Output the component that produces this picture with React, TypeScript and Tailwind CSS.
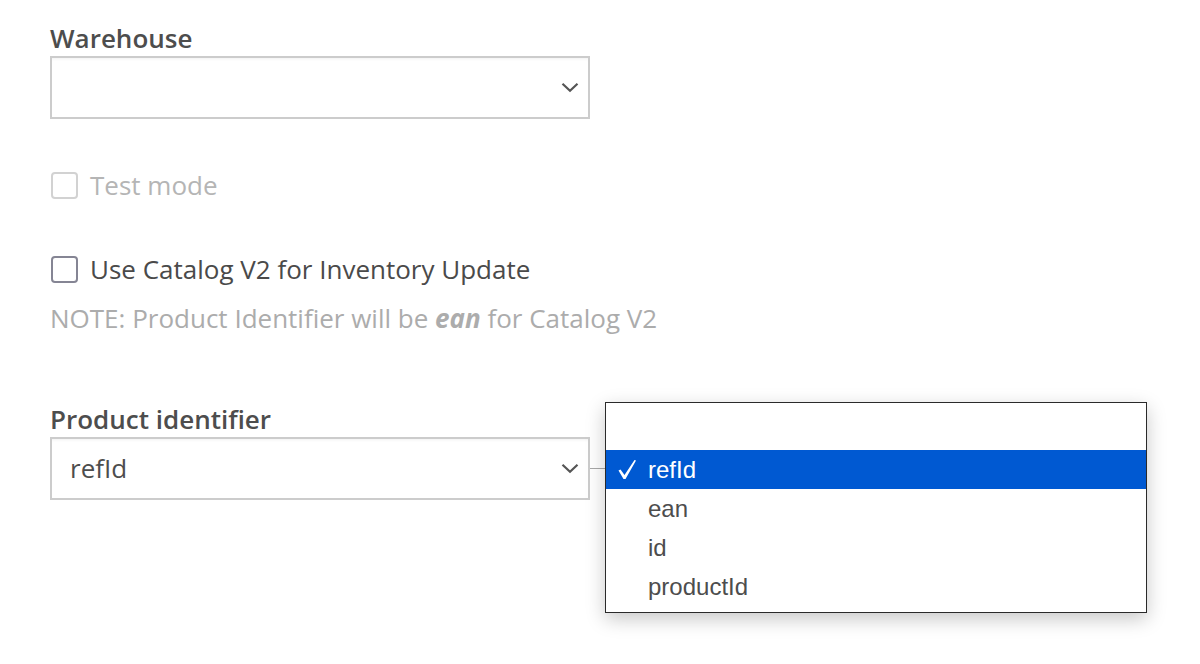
import React from "react";

const sans = "font-['Open_Sans','Liberation_Sans',sans-serif]";

function Chevron() {
  return (
    <svg width="18" height="11" viewBox="0 0 18 11" className="shrink-0">
      <path d="M1.5 1.8 L9 8.8 L16.5 1.8" fill="none" stroke="#555" strokeWidth="2.2" />
    </svg>
  );
}

function Check() {
  return (
    <svg width="20" height="21" viewBox="0 0 20 21" className="shrink-0">
      <path d="M1.5 11.5 L3.5 10.5 L7.5 16 L17.5 1 L19 1.5 L8.5 20 L6.5 20 Z" fill="#fff" />
    </svg>
  );
}

function Select({ value }: { value?: string }) {
  return (
    <div className="flex h-[63px] w-[540px] items-center justify-between border-2 border-[#cccccc] bg-white pl-[18px] pr-[9px] shadow-[inset_0_3px_3px_-2px_rgba(0,0,0,0.06)]">
      <span className="text-[26px] text-[#4d4d4d]">{value}</span>
      <Chevron />
    </div>
  );
}

function Checkbox({ label, disabled }: { label: string; disabled?: boolean }) {
  return (
    <div className="flex h-[34px] items-center gap-[12px]">
      <span
        className={
          disabled
            ? "ml-px h-[27px] w-[27px] rounded-[4px] border-2 border-[#d2d2d2] bg-white"
            : "ml-px h-[27px] w-[27px] rounded-[4px] border-2 border-[#858594] bg-white"
        }
      />
      <span className={disabled ? "text-[26px] text-[#b5b5b5]" : "text-[26px] text-[#4a4a4a]"}>{label}</span>
    </div>
  );
}

const options = ["ean", "id", "productId"];

export default function App() {
  return (
    <div className={`relative h-[664px] w-[1200px] overflow-hidden bg-white ${sans}`}>
      <div className="flex flex-col pl-[50px] pt-[21px]">
        <label className="text-[26px] font-semibold leading-[34px] text-[#4d4d4d]">Warehouse</label>
        <div className="mt-px">
          <Select />
        </div>

        <div className="mt-[49px]">
          <Checkbox label="Test mode" disabled />
        </div>
        <div className="mt-[50px]">
          <Checkbox label="Use Catalog V2 for Inventory Update" />
        </div>
        <p className="mt-[15px] text-[26px] leading-[34px] text-[#acacac]">
          NOTE: Product Identifier will be <b className="font-bold italic">ean</b> for Catalog V2
        </p>

        <label className="mt-[67px] text-[26px] font-semibold leading-[34px] text-[#4d4d4d]">Product identifier</label>
        <div className="mt-px flex items-center">
          <Select value="refId" />
          <span className="h-px w-[16px] bg-[#a8a8a8]" />
        </div>
      </div>

      {/* native select popup */}
      <div className="absolute left-[605px] top-[402px] flex h-[211px] w-[542px] flex-col border border-[#2a2a2a] bg-white font-['Liberation_Sans',Arial,sans-serif] text-[24px] shadow-[0_6px_18px_rgba(0,0,0,0.22)]">
        <div className="h-[47px]" />
        <div className="flex h-[39px] items-center bg-[#0059d2] text-white">
          <span className="flex w-[42px] pl-[11px]">
            <Check />
          </span>
          <span>refId</span>
        </div>
        {options.map((o) => (
          <div key={o} className="flex h-[39px] items-center pl-[42px] text-[#4d4d4d]">
            {o}
          </div>
        ))}
      </div>
    </div>
  );
}
